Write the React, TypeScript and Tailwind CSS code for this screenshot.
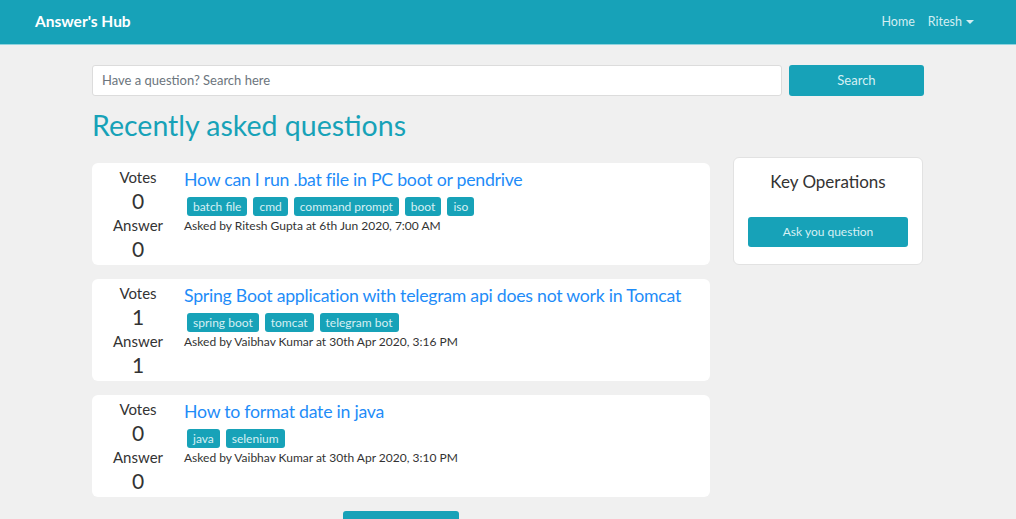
const questions = [
  {
    votes: 0,
    answers: 0,
    title: "How can I run .bat file in PC boot or pendrive",
    tags: ["batch file", "cmd", "command prompt", "boot", "iso"],
    meta: "Asked by Ritesh Gupta at 6th Jun 2020, 7:00 AM",
  },
  {
    votes: 1,
    answers: 1,
    title: "Spring Boot application with telegram api does not work in Tomcat",
    tags: ["spring boot", "tomcat", "telegram bot"],
    meta: "Asked by Vaibhav Kumar at 30th Apr 2020, 3:16 PM",
  },
  {
    votes: 0,
    answers: 0,
    title: "How to format date in java",
    tags: ["java", "selenium"],
    meta: "Asked by Vaibhav Kumar at 30th Apr 2020, 3:10 PM",
  },
];

function QuestionCard({ q }: { q: (typeof questions)[number] }) {
  return (
    <div className="flex rounded-md bg-white">
      <div className="w-[92px] shrink-0 pt-[2px] pb-[4px] text-center leading-[24px] text-[#333]">
        <div className="text-[15px]">Votes</div>
        <div className="text-[21px]">{q.votes}</div>
        <div className="text-[15px]">Answer</div>
        <div className="text-[21px]">{q.answers}</div>
      </div>
      <div className="min-w-0 flex-1 pt-[5px]">
        <a className="block text-[17.7px] leading-[24px] tracking-[-0.25px] whitespace-nowrap text-[#1e8cf8]">
          {q.title}
        </a>
        <div className="mt-[5px] ml-[3px] flex gap-[6px]">
          {q.tags.map((t) => (
            <span
              key={t}
              className="h-[19px] rounded-[3px] bg-[#17a2b8] px-[6px] text-[12px] leading-[19px] text-[#d6f0f4]"
            >
              {t}
            </span>
          ))}
        </div>
        <div className="mt-[2px] text-[12px] leading-[16px] text-[#333]">{q.meta}</div>
      </div>
    </div>
  );
}

export default function App() {
  return (
    <div className="min-h-[519px] bg-[#f0f0f0] font-['Lato',sans-serif]">
      <nav className="flex h-[45px] items-center justify-between border-b border-[#8fd3de] bg-[#17a2b8] pr-[42px] pl-[35px]">
        <span className="text-[15.5px] font-bold text-white">Answer&apos;s Hub</span>
        <div className="flex items-center gap-[13px] text-[12.5px] text-[#d3eef2]">
          <span>Home</span>
          <span className="flex items-center">
            Ritesh
            <span className="ml-[4px] inline-block border-x-[4px] border-t-[4px] border-x-transparent border-t-[#d3eef2]" />
          </span>
        </div>
      </nav>

      <div className="mx-auto w-[832px] pt-[20px]">
        <div className="flex gap-[7px]">
          <div className="flex h-[31px] flex-1 items-center rounded-[3px] border border-[#dcdcdc] bg-white px-[9px] text-[13px] text-[#6c757d]">
            Have a question? Search here
          </div>
          <button className="h-[31px] w-[135px] rounded-[3px] bg-[#17a2b8] text-[13px] text-[#d6f0f4]">
            Search
          </button>
        </div>

        <h1 className="mt-[11px] text-[28.5px] leading-[36px] text-[#17a2b8]">Recently asked questions</h1>

        <div className="mt-[20px] flex gap-[23px]">
          <div className="flex w-[618px] flex-col gap-[14px]">
            {questions.map((q) => (
              <QuestionCard key={q.title} q={q} />
            ))}
            <div className="flex justify-center">
              <button className="h-[30px] w-[116px] rounded-[3px] bg-[#17a2b8]" />
            </div>
          </div>
          <div className="-mt-[6px] h-[108px] w-[190px] rounded-md border border-[#e2e2e2] bg-white px-[14px] pt-[12px]">
            <div className="text-center text-[17px] leading-[24px] text-[#333]">Key Operations</div>
            <button className="mt-[23px] h-[30px] w-full rounded-[3px] bg-[#17a2b8] text-[12px] text-[#d6f0f4]">
              Ask you question
            </button>
          </div>
        </div>
      </div>
    </div>
  );
}
